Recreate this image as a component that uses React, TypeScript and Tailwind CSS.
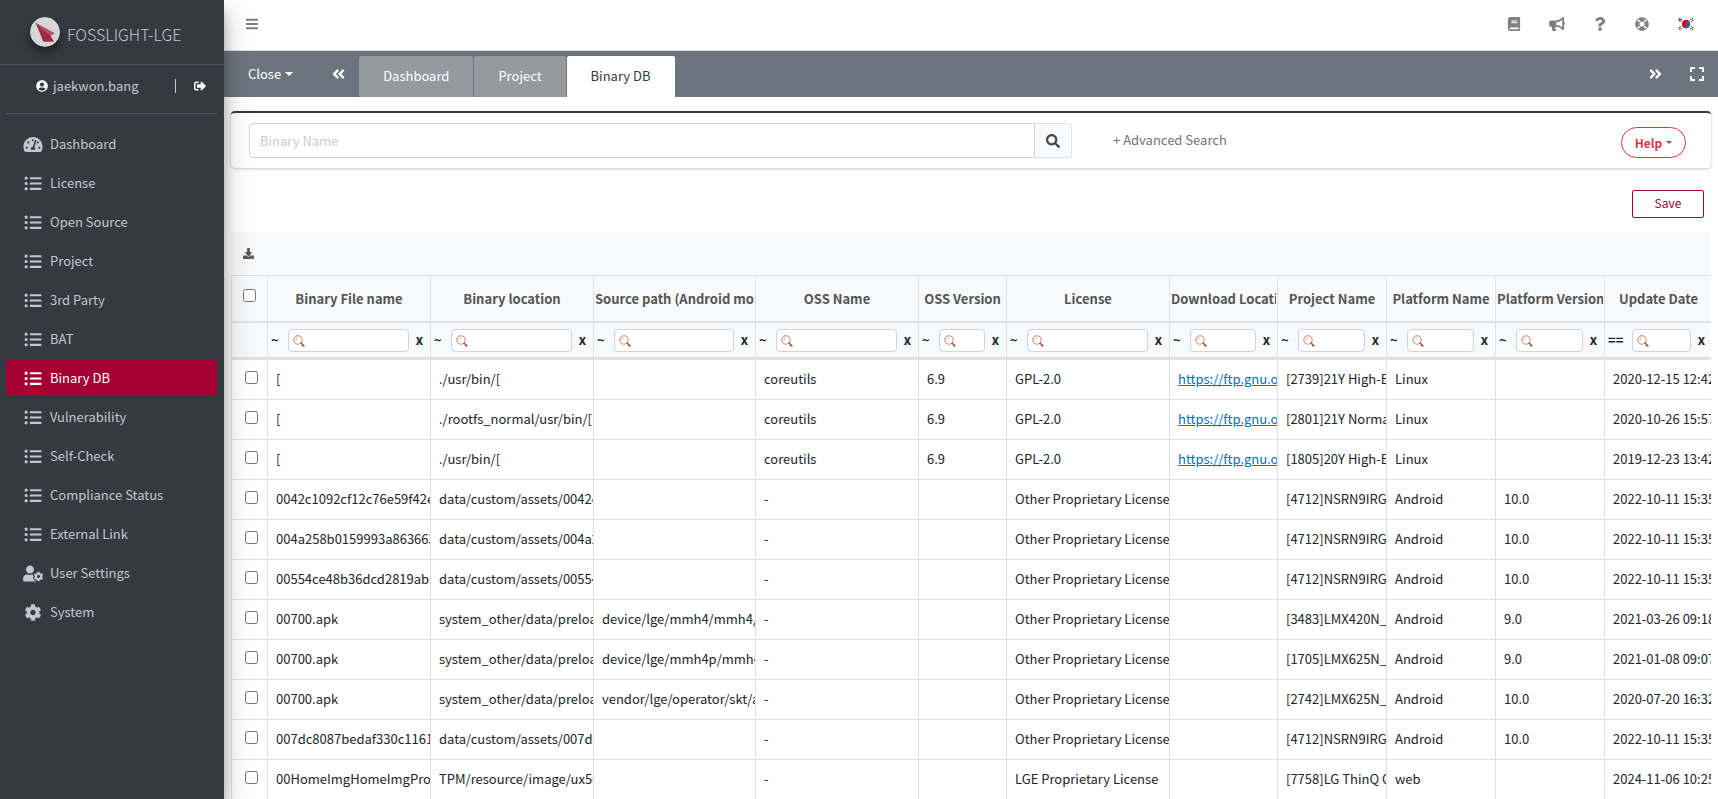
import React from 'react';
import {
  FaAngleDoubleLeft,
  FaAngleDoubleRight,
  FaBars,
  FaBook,
  FaBullhorn,
  FaCog,
  FaDownload,
  FaExpand,
  FaLifeRing,
  FaListUl,
  FaQuestion,
  FaSearch,
  FaSignOutAlt,
  FaTachometerAlt,
  FaUserCircle,
  FaUserCog,
} from 'react-icons/fa';
import type { IconType } from 'react-icons';

interface NavEntry {
  label: string;
  icon: IconType;
  active?: boolean;
}

const navEntries: NavEntry[] = [
  { label: 'Dashboard', icon: FaTachometerAlt },
  { label: 'License', icon: FaListUl },
  { label: 'Open Source', icon: FaListUl },
  { label: 'Project', icon: FaListUl },
  { label: '3rd Party', icon: FaListUl },
  { label: 'BAT', icon: FaListUl },
  { label: 'Binary DB', icon: FaListUl, active: true },
  { label: 'Vulnerability', icon: FaListUl },
  { label: 'Self-Check', icon: FaListUl },
  { label: 'Compliance Status', icon: FaListUl },
  { label: 'External Link', icon: FaListUl },
  { label: 'User Settings', icon: FaUserCog },
  { label: 'System', icon: FaCog },
];

const columns = [
  { label: 'Binary File name', width: 'w-[163px]', op: '~' },
  { label: 'Binary location', width: 'w-[163px]', op: '~' },
  { label: 'Source path (Android model)', width: 'w-[162px]', op: '~' },
  { label: 'OSS Name', width: 'w-[163px]', op: '~' },
  { label: 'OSS Version', width: 'w-[88px]', op: '~' },
  { label: 'License', width: 'w-[163px]', op: '~' },
  { label: 'Download Location', width: 'w-[108px]', op: '~' },
  { label: 'Project Name', width: 'w-[109px]', op: '~' },
  { label: 'Platform Name', width: 'w-[109px]', op: '~' },
  { label: 'Platform Version', width: 'w-[109px]', op: '~' },
  { label: 'Update Date', width: 'w-[107px]', op: '==' },
];

interface BinaryRow {
  file: string;
  location: string;
  source: string;
  oss: string;
  version: string;
  license: string;
  download: string;
  project: string;
  platform: string;
  platformVersion: string;
  updated: string;
}

const OPL = 'Other Proprietary License';
const GNU = 'https://ftp.gnu.org';

const rows: BinaryRow[] = [
  { file: '[', location: './usr/bin/[', source: '', oss: 'coreutils', version: '6.9', license: 'GPL-2.0', download: GNU, project: '[2739]21Y High-E', platform: 'Linux', platformVersion: '', updated: '2020-12-15 12:42' },
  { file: '[', location: './rootfs_normal/usr/bin/[', source: '', oss: 'coreutils', version: '6.9', license: 'GPL-2.0', download: GNU, project: '[2801]21Y Normal', platform: 'Linux', platformVersion: '', updated: '2020-10-26 15:57' },
  { file: '[', location: './usr/bin/[', source: '', oss: 'coreutils', version: '6.9', license: 'GPL-2.0', download: GNU, project: '[1805]20Y High-E', platform: 'Linux', platformVersion: '', updated: '2019-12-23 13:42' },
  { file: '0042c1092cf12c76e59f42e', location: 'data/custom/assets/0042c', source: '', oss: '-', version: '', license: OPL, download: '', project: '[4712]NSRN9IRG', platform: 'Android', platformVersion: '10.0', updated: '2022-10-11 15:35' },
  { file: '004a258b0159993a863663', location: 'data/custom/assets/004a2', source: '', oss: '-', version: '', license: OPL, download: '', project: '[4712]NSRN9IRG', platform: 'Android', platformVersion: '10.0', updated: '2022-10-11 15:35' },
  { file: '00554ce48b36dcd2819ab1', location: 'data/custom/assets/00554', source: '', oss: '-', version: '', license: OPL, download: '', project: '[4712]NSRN9IRG', platform: 'Android', platformVersion: '10.0', updated: '2022-10-11 15:35' },
  { file: '00700.apk', location: 'system_other/data/preloa', source: 'device/lge/mmh4/mmh4/', oss: '-', version: '', license: OPL, download: '', project: '[3483]LMX420N_', platform: 'Android', platformVersion: '9.0', updated: '2021-03-26 09:18' },
  { file: '00700.apk', location: 'system_other/data/preloa', source: 'device/lge/mmh4p/mmh4', oss: '-', version: '', license: OPL, download: '', project: '[1705]LMX625N_', platform: 'Android', platformVersion: '9.0', updated: '2021-01-08 09:07' },
  { file: '00700.apk', location: 'system_other/data/preloa', source: 'vendor/lge/operator/skt/a', oss: '-', version: '', license: OPL, download: '', project: '[2742]LMX625N_', platform: 'Android', platformVersion: '10.0', updated: '2020-07-20 16:32' },
  { file: '007dc8087bedaf330c1161', location: 'data/custom/assets/007dc', source: '', oss: '-', version: '', license: OPL, download: '', project: '[4712]NSRN9IRG', platform: 'Android', platformVersion: '10.0', updated: '2022-10-11 15:35' },
  { file: '00HomeImgHomeImgPro', location: 'TPM/resource/image/ux50', source: '', oss: '-', version: '', license: 'LGE Proprietary License', download: '', project: '[7758]LG ThinQ O', platform: 'web', platformVersion: '', updated: '2024-11-06 10:25' },
];

function BrandMark() {
  return (
    <svg viewBox="0 0 30 30" className="w-[30px] h-[30px] rounded-full shadow-[0_6px_8px_rgba(0,0,0,0.4)]" aria-hidden="true">
      <circle cx="15" cy="15" r="15" fill="#d5d6d8" />
      <path d="M5.5 5.5 20.5 18.5 24 24.8H13.3Z" fill="#9f2b44" />
      <path d="M5.5 5.5 24.8 16.2 20.5 18.8Z" fill="#b64f63" />
    </svg>
  );
}

function KoreaFlag() {
  return (
    <svg viewBox="0 0 18 14" className="w-[18px] h-[14px]" aria-hidden="true">
      <g transform="rotate(-35 9 7)">
        <circle cx="9" cy="7" r="4.2" fill="#d0021b" />
        <path d="M4.8 7A4.2 4.2 0 0 0 13.2 7A2.1 1.4 0 0 0 9 7A2.1 1.4 0 0 1 4.8 7Z" fill="#3a55a4" />
      </g>
      <g stroke="#222" strokeWidth="0.9">
        <path d="M1.2 3.4 3 .8M2.2 4.1 4 1.5M3.2 4.8 5 2.2" />
        <path d="M15 .8 16.8 3.4M14 1.5 15.8 4.1M13 2.2 14.8 4.8" strokeDasharray="1.2 .8" />
        <path d="M1.2 10.6 3 13.2M2.2 9.9 4 12.5M3.2 9.2 5 11.8" strokeDasharray="1.2 .8" />
        <path d="M15 13.2 16.8 10.6M14 12.5 15.8 9.9M13 11.8 14.8 9.2" strokeDasharray="1.2 .8" />
      </g>
    </svg>
  );
}

function FilterGlass() {
  return (
    <svg viewBox="0 0 12 12" className="w-3 h-3 absolute left-[5px] top-[6px]" aria-hidden="true">
      <circle cx="5" cy="5" r="4.2" fill="#fff" stroke="#c98a78" strokeWidth="1.1" />
      <path d="M3 5A2.2 2.2 0 0 1 5 2.8" fill="none" stroke="#dcb0a2" strokeWidth="1" />
      <path d="M7.6 7.6 11 11M9 10.8h2.6" stroke="#a8583f" strokeWidth="1.5" fill="none" />
    </svg>
  );
}

function Caret({ small }: { small?: boolean }) {
  return (
    <span
      className={
        small
          ? 'inline-block border-x-[3px] border-t-[3px] border-x-transparent border-t-current'
          : 'inline-block border-x-4 border-t-4 border-x-transparent border-t-current'
      }
    />
  );
}

function Sidebar() {
  return (
    <aside className="relative z-10 w-56 shrink-0 bg-[#343a40] text-[#c2c7d0] shadow-[0_14px_28px_rgba(0,0,0,0.25),0_10px_10px_rgba(0,0,0,0.22)]">
      <a href="#" className="flex items-center h-[65px] pl-[30px] gap-[7px] border-b border-[#4b545c] text-base font-light">
        <BrandMark />
        <span className="pt-1">FOSSLIGHT-LGE</span>
      </a>
      <div className="ml-[6px] mr-[7px] h-[49px] pb-[6px] flex items-center border-b border-[#4f5962] text-[13px]">
        <a href="#" className="flex items-center gap-[5px] pl-[30px]">
          <FaUserCircle className="w-3 h-3 text-white" />
          jaekwon.bang
        </a>
        <span className="ml-auto w-px h-[14px] bg-[#c2c7d0]" />
        <button type="button" aria-label="Sign out" className="ml-[18px] mr-[11px] text-white">
          <FaSignOutAlt className="w-3 h-3" />
        </button>
      </div>
      <nav className="pl-[6px] pr-[7px] pt-[12px] flex flex-col gap-[3px]">
        {navEntries.map(({ label, icon: Icon, active }) => (
          <a
            key={label}
            href="#"
            className={
              active
                ? 'flex items-center h-9 rounded-sm pl-[17px] gap-[7px] text-[13px] bg-[#a50034] text-white shadow-sm'
                : 'flex items-center h-9 rounded-sm pl-[17px] gap-[7px] text-[13px]'
            }
          >
            <Icon className="w-5 h-[17px]" />
            {label}
          </a>
        ))}
      </nav>
    </aside>
  );
}

function TopBar() {
  return (
    <header className="flex items-center h-[51px] pb-[2px] pl-[22px] pr-[23px] border-b border-[#dee2e6] text-[#808080]">
      <button type="button" aria-label="Toggle menu">
        <FaBars className="w-3 h-[14px]" />
      </button>
      <div className="ml-auto flex items-center gap-7">
        <button type="button" aria-label="Guide"><FaBook className="w-[14px] h-[14px]" /></button>
        <button type="button" aria-label="Notices"><FaBullhorn className="w-4 h-[14px]" /></button>
        <button type="button" aria-label="Questions"><FaQuestion className="w-[14px] h-[14px]" /></button>
        <button type="button" aria-label="Support"><FaLifeRing className="w-[14px] h-[14px]" /></button>
        <button type="button" aria-label="Korean"><KoreaFlag /></button>
      </div>
    </header>
  );
}

function TabBar() {
  return (
    <div className="flex items-center h-[46px] bg-[#6c757d] text-white text-[13px]">
      <button type="button" className="flex items-center gap-1 ml-6">
        Close <Caret />
      </button>
      <button type="button" aria-label="Scroll tabs left" className="ml-[39px] mr-[14px]">
        <FaAngleDoubleLeft className="w-[13px] h-4" />
      </button>
      <div className="flex self-end h-[41px] gap-px">
        <button type="button" className="px-6 pb-[2px] rounded-t-xs bg-[#949a9f]">Dashboard</button>
        <button type="button" className="px-6 pb-[2px] rounded-t-xs bg-[#949a9f]">Project</button>
        <button type="button" className="px-6 pb-[2px] rounded-t-xs bg-white text-[#343a40]">Binary DB</button>
      </div>
      <button type="button" aria-label="Scroll tabs right" className="ml-auto mr-7">
        <FaAngleDoubleRight className="w-[13px] h-4" />
      </button>
      <button type="button" aria-label="Full screen" className="mr-[14px]">
        <FaExpand className="w-[14px] h-4" />
      </button>
    </div>
  );
}

function SearchCard() {
  return (
    <div className="flex items-start h-[57px] mt-[14px] pt-[10px] pl-[18px] pr-[25px] bg-white rounded-sm border-t-2 border-[#343a40] shadow-[0_0_1px_rgba(0,0,0,0.13),0_1px_3px_rgba(0,0,0,0.2)]">
      <div className="flex w-[823px] h-[35px]">
        <input
          type="text"
          aria-label="Binary Name"
          placeholder="Binary Name"
          className="flex-1 min-w-0 rounded-l-sm border border-[#ced4da] px-[10px] text-[13px] placeholder:text-[#c8cbce]"
        />
        <button type="button" aria-label="Search" className="w-[37px] flex items-center justify-center rounded-r-sm border border-l-0 border-[#dee2e6] bg-[#f8f9fa] text-[#444]">
          <FaSearch className="w-[14px] h-[14px]" />
        </button>
      </div>
      <a href="#" className="ml-[41px] mt-[7px] text-[13px] text-[#6c757d]">+ Advanced Search</a>
      <button type="button" className="ml-auto mt-1 flex items-center justify-center gap-1 w-[65px] h-[31px] rounded-full border border-[#dc3545] text-[#dc3545] text-xs font-bold">
        Help <Caret small />
      </button>
    </div>
  );
}

function BinaryTable() {
  return (
    <div className="overflow-hidden">
      <div className="flex items-center h-[43px] pl-3 bg-[#f8f9fa]">
        <button type="button" aria-label="Export" className="text-[#555]">
          <FaDownload className="w-[11px] h-[11px]" />
        </button>
      </div>
      <table className="w-full table-fixed border-separate border-spacing-0 border-l border-[#dee2e6] text-[13px]">
        <colgroup>
          <col className="w-[36px]" />
          {columns.map((c) => (
            <col key={c.label} className={c.width} />
          ))}
        </colgroup>
        <thead className="bg-[#f8f9fa]">
          <tr className="h-12">
            <th className="border-t border-r border-b-2 border-[#dee2e6] p-0">
              <input type="checkbox" aria-label="Select all rows" className="block ml-[11px] mb-[6px]" />
            </th>
            {columns.map((c) => (
              <th key={c.label} className="border-t border-r border-b-2 border-[#dee2e6] p-0 last:border-r-0">
                <div className="mx-px overflow-hidden whitespace-nowrap text-[#555] font-bold">{c.label}</div>
              </th>
            ))}
          </tr>
          <tr className="h-[37px]">
            <td className="border-r border-b-3 border-[#dee2e6] p-0" />
            {columns.map((c) => (
              <td key={c.label} className="border-r border-b-3 border-[#dee2e6] p-0 font-bold text-[#212529] last:border-r-0">
                <div className="flex items-center">
                  <span className={c.op === '~' ? 'w-5 pl-[3px]' : 'w-[27px] pl-[3px]'}>{c.op}</span>
                  <div className="relative flex-1 min-w-0">
                    <FilterGlass />
                    <input type="text" aria-label={`Filter ${c.label}`} className="block w-full h-[23px] rounded-sm border border-[#ced4da] bg-white pl-5 pr-1 font-normal" />
                  </div>
                  <button type="button" aria-label={`Clear ${c.label}`} className="w-[21px] pb-px">x</button>
                </div>
              </td>
            ))}
          </tr>
        </thead>
        <tbody className="text-[#212529]">
          {rows.map((row, i) => (
            <tr key={i} className="h-10 *:border-b *:border-r *:border-[#dee2e6] *:pt-0 *:pb-[2px] *:pl-2 *:pr-0 *:overflow-hidden *:whitespace-nowrap *:last:border-r-0">
              <td>
                <input type="checkbox" aria-label={`Select row ${i + 1}`} className="block ml-[5px] mb-[2px]" />
              </td>
              <td>{row.file}</td>
              <td>{row.location}</td>
              <td>{row.source}</td>
              <td>{row.oss}</td>
              <td>{row.version}</td>
              <td>{row.license}</td>
              <td>
                {row.download && <a href={row.download} className="text-[#0071bc] underline">{row.download}</a>}
              </td>
              <td>{row.project}</td>
              <td>{row.platform}</td>
              <td>{row.platformVersion}</td>
              <td>{row.updated}</td>
            </tr>
          ))}
        </tbody>
      </table>
    </div>
  );
}

export default function App() {
  return (
    <div className="flex h-screen overflow-hidden bg-white font-['Noto_Sans_CJK_KR','Noto_Sans_CJK_JP',sans-serif]">
      <Sidebar />
      <div className="flex-1 min-w-0">
        <TopBar />
        <TabBar />
        <main className="px-[7px]">
          <SearchCard />
          <div className="flex justify-end h-16 pt-[22px] pr-[7px]">
            <button type="button" className="w-[72px] h-7 pb-[2px] rounded-xs border border-[#a50034] text-xs text-[#a50034]">Save</button>
          </div>
          <BinaryTable />
        </main>
      </div>
    </div>
  );
}
